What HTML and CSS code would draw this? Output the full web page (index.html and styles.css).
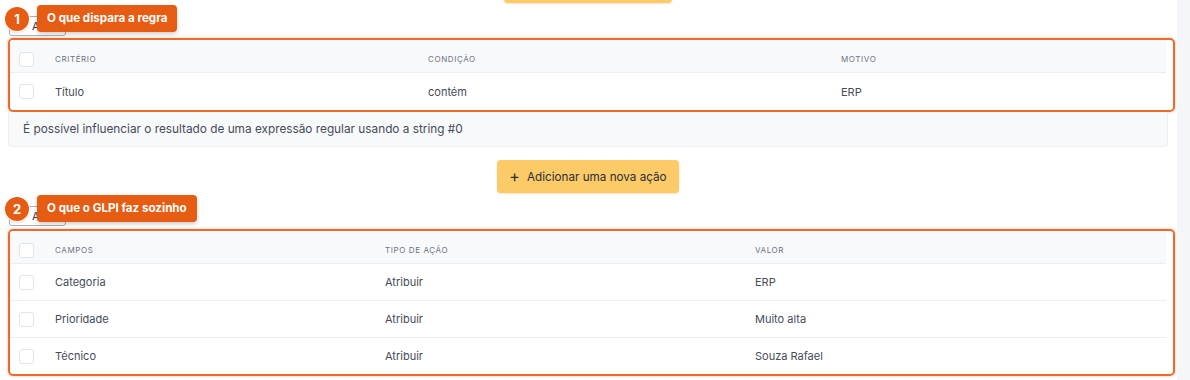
FILE: index.html
```html
<!DOCTYPE html>
<html lang="pt-BR">
<head>
<meta charset="utf-8">
<title>Regra</title>
<link rel="stylesheet" href="styles.css">
</head>
<body>
<div class="page">
  <main class="main">
    <div class="top-btn-wrap"><span class="btn-yellow top-btn"></span></div>

    <div class="sec-head">
      <button class="btn-outline">Ações</button>
      <div class="annot">
        <span class="annot-num">1</span>
        <span class="annot-label">O que dispara a regra</span>
      </div>
    </div>
    <div class="hl">
      <div class="tbl t1">
        <div class="row head">
          <div class="cb-cell"><span class="cb"></span></div>
          <div>CRITÉRIO</div><div>CONDIÇÃO</div><div>MOTIVO</div>
        </div>
        <div class="row">
          <div class="cb-cell"><span class="cb"></span></div>
          <div>Título</div><div>contém</div><div>ERP</div>
        </div>
      </div>
    </div>
    <div class="info">É possível influenciar o resultado de uma expressão regular usando a string #0</div>

    <div class="btn-row"><button class="btn-yellow"><span class="plus">+</span>Adicionar uma nova ação</button></div>

    <div class="sec-head sec-2">
      <button class="btn-outline">Ações</button>
      <div class="annot">
        <span class="annot-num">2</span>
        <span class="annot-label">O que o GLPI faz sozinho</span>
      </div>
    </div>
    <div class="hl">
      <div class="tbl t2">
        <div class="row head">
          <div class="cb-cell"><span class="cb"></span></div>
          <div>CAMPOS</div><div>TIPO DE AÇÃO</div><div>VALOR</div>
        </div>
        <div class="row">
          <div class="cb-cell"><span class="cb"></span></div>
          <div>Categoria</div><div>Atribuir</div><div>ERP</div>
        </div>
        <div class="row">
          <div class="cb-cell"><span class="cb"></span></div>
          <div>Prioridade</div><div>Atribuir</div><div>Muito alta</div>
        </div>
        <div class="row">
          <div class="cb-cell"><span class="cb"></span></div>
          <div>Técnico</div><div>Atribuir</div><div>Souza Rafael</div>
        </div>
      </div>
    </div>
  </main>
  <aside class="side"></aside>
</div>
</body>
</html>
```
FILE: styles.css
```css
* { box-sizing: border-box; }
html, body { margin: 0; padding: 0; background: #fff; }
body {
  font-family: Inter, "Noto Sans", sans-serif;
  color: #454b57;
  font-size: 11px;
}
.page { display: flex; height: 380px; overflow: hidden; }
.main { width: 1177px; padding: 0 9px 0 8px; }
.side { flex: 1; background: #f5f6fa; }

.top-btn-wrap { display: flex; justify-content: center; height: 3px; }
.top-btn { width: 168px; height: 30px; margin-top: -27px; display: block; }

.btn-yellow {
  background: #fcca66;
  border: none;
  border-radius: 4px;
  font-family: inherit;
  color: #2b2f38;
  box-shadow: 0 1px 2px rgba(200,150,40,0.25);
}

.sec-head { position: relative; height: 35px; padding-top: 13px; }
.sec-head.sec-2 { height: 36px; }
.btn-outline {
  display: block;
  margin-left: 1px;
  width: 57px;
  height: 20px;
  border: 1px solid #a8aeb9;
  border-radius: 3px;
  background: #fff;
  font-family: inherit;
  font-size: 11px;
  color: #3b404a;
  text-align: left;
  padding: 0 0 0 22px;
}
.annot { position: absolute; left: -3px; top: 2px; display: flex; align-items: center; gap: 8px; }
.annot-num {
  width: 24px; height: 24px; border-radius: 50%;
  background: #e65c12;
  color: #fff; font-weight: 700; font-size: 13px;
  display: flex; align-items: center; justify-content: center;
  box-shadow: 0 0 0 1px #fff, 0 1px 3px rgba(0,0,0,0.25);
}
.annot-label {
  background: #e65c12;
  color: #fff;
  font-weight: 700;
  font-size: 11.6px;
  height: 27px;
  line-height: 27px;
  padding: 0 10px;
  border-radius: 4px;
  box-shadow: 0 2px 4px rgba(0,0,0,0.2);
}

.hl {
  margin-right: -7px;
  border: 2px solid #ec6a2c;
  border-radius: 5px;
  box-shadow: 0 0 3px rgba(236,106,44,0.45);
  overflow: hidden;
}
.tbl { margin-right: 7px; }
.row {
  display: grid;
  align-items: center;
  height: 37px;
  border-top: 1px solid #eceef2;
}
.t1 .row { grid-template-columns: 45px 373px 413px 1fr; height: 38px; }
.t2 .row { grid-template-columns: 45px 330px 370px 1fr; }
.tbl .row.head {
  height: 32px;
  border-top: none;
  background: #f8f9fb;
  font-size: 8px;
  letter-spacing: 0.6px;
  color: #6c7385;
}
.row.head > div { padding-top: 6px; }
.cb-cell { padding-left: 9px; display: flex; }
.cb {
  width: 15px; height: 15px;
  border: 1px solid #e1e4ea;
  border-radius: 3px;
  background: #fff;
}

.info {
  height: 35px;
  display: flex; align-items: center;
  padding-left: 14px;
  background: #f8f9fb;
  border: 1px solid #eff1f5;
  border-top: none;
  border-radius: 0 0 4px 4px;
  color: #454b57;
  font-size: 11.8px;
}

.btn-row { display: flex; justify-content: center; padding-top: 13px; height: 46px; }
.btn-row .btn-yellow {
  width: 182px; height: 33px;
  font-size: 11.7px;
  display: flex; align-items: center; justify-content: center; gap: 7px;
}
.plus { font-size: 16px; font-weight: 400; line-height: 1; margin-top: -2px; }
```
